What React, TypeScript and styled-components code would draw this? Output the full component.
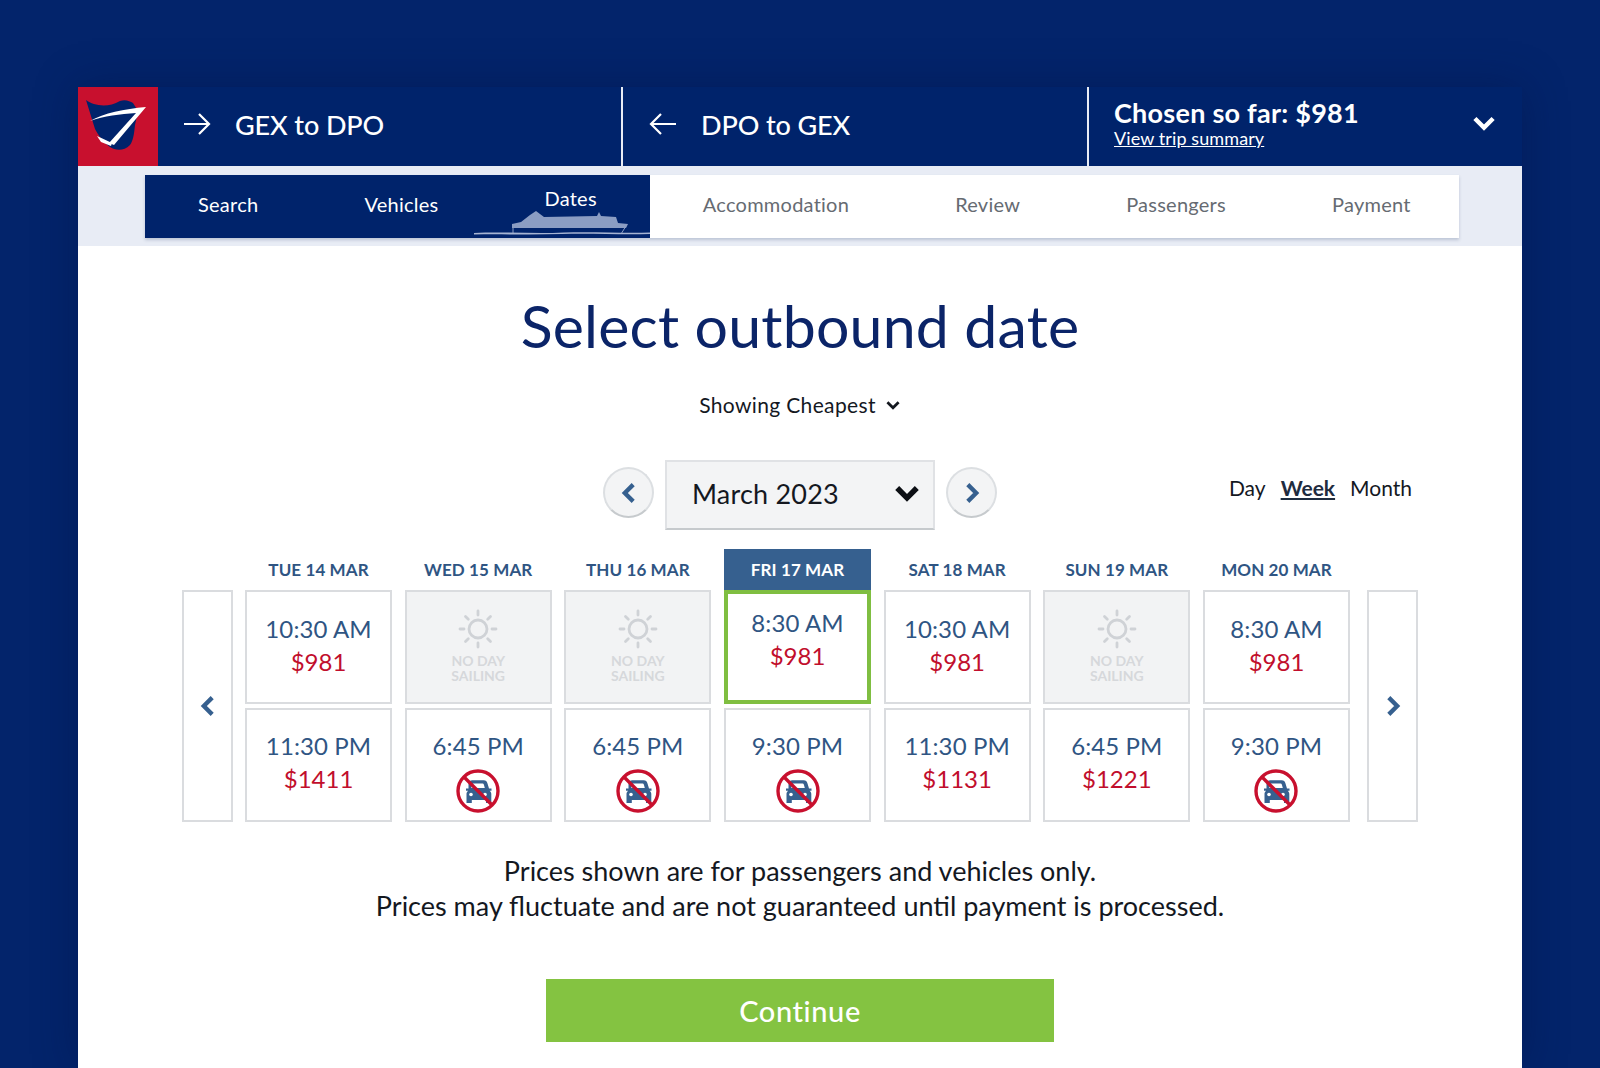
import React from 'react';
import styled, { createGlobalStyle } from 'styled-components';

const GlobalStyle = createGlobalStyle`
  html, body { margin: 0; padding: 0; background: #03246b; }
  body { font-family: Lato, "Open Sans", sans-serif; color: #14181f; }
`;

const Page = styled.div`
  width: 1600px;
  height: 1068px;
  overflow: hidden;
  padding: 87px 78px 0;
  box-sizing: border-box;
  background: #03246b;
`;

const Frame = styled.div`
  width: 1444px;
  height: 981px;
  background: #fff;
  box-shadow: 0 0 40px rgba(0, 16, 60, 0.35);
`;

const Header = styled.header`
  display: flex;
  height: 79px;
  background: #00236b;
  color: #fff;
`;

const LogoBox = styled.div`
  width: 80px;
  flex: none;
  background: #c8102e;
  display: flex;
`;

const Leg = styled.div<{ $w: number; $pad: number }>`
  width: ${({ $w }) => $w}px;
  flex: none;
  box-sizing: border-box;
  padding-left: ${({ $pad }) => $pad}px;
  padding-bottom: 5px;
  display: flex;
  align-items: center;
  gap: 24px;
  border-right: 2px solid #e8ecf5;
  font-size: 27px;
  letter-spacing: -0.1px;
  font-weight: 500;
`;

const Summary = styled.div`
  flex: 1;
  display: flex;
  align-items: center;
  justify-content: space-between;
  padding: 0 25px 7px 25px;
`;

const SummaryTitle = styled.div`
  font-size: 27px;
  font-weight: 700;
  line-height: 30px;
  letter-spacing: 0.25px;
`;

const SummaryLink = styled.a`
  display: block;
  font-size: 18px;
  line-height: 20px;
  letter-spacing: 0.1px;
  text-decoration: underline;
  color: #fff;
`;

const StepBand = styled.div`
  height: 80px;
  box-sizing: border-box;
  padding: 9px 63px 8px 67px;
  background: #e8ecf5;
`;

const Steps = styled.nav`
  display: flex;
  height: 63px;
  background: #fff;
  box-shadow: 0 2px 3px rgba(60, 80, 120, 0.25);
`;

const DoneSteps = styled.div`
  display: flex;
  position: relative;
  background: #00236b;
`;

const Step = styled.div<{ $active?: boolean; $done?: boolean }>`
  padding: 0 53px;
  display: flex;
  align-items: center;
  font-size: 20px;
  letter-spacing: 0.25px;
  color: ${({ $done }) => ($done ? '#fff' : '#666b72')};
  padding-bottom: ${({ $active }) => ($active ? '18px' : '6px')};
`;

const Ship = styled.svg`
  position: absolute;
  right: 0;
  bottom: 0;
  width: 176px;
  height: 32px;
`;

const Content = styled.main`
  display: flex;
  flex-direction: column;
  align-items: center;
`;

const Title = styled.h1`
  margin: 45px 0 0;
  font-size: 59px;
  line-height: 70px;
  font-weight: 400;
  color: #0b2468;
  letter-spacing: 0.2px;
`;

const Sort = styled.div`
  margin-top: 30px;
  font-size: 21px;
  line-height: 28px;
  letter-spacing: 0.35px;
  display: flex;
  align-items: center;
  gap: 9px;
`;

const DateBar = styled.div`
  margin-top: 41px;
  width: 1236px;
  height: 70px;
  position: relative;
  display: flex;
  justify-content: center;
  align-items: center;
  gap: 11px;
`;

const RoundButton = styled.button`
  width: 51px;
  height: 51px;
  margin-bottom: 5px;
  padding: 0;
  border-radius: 50%;
  border: 2px solid #dcdfe2;
  border-bottom-color: #c6cacd;
  background: #f3f4f5;
  display: flex;
  align-items: center;
  justify-content: center;
`;

const MonthSelect = styled.div`
  width: 270px;
  height: 70px;
  box-sizing: border-box;
  padding: 0 12px 4px 25px;
  display: flex;
  align-items: center;
  justify-content: space-between;
  background: #f3f4f5;
  border: 2px solid #e0e2e5;
  border-bottom-color: #c6cacd;
  font-size: 27px;
  letter-spacing: 0.2px;
`;

const ViewSwitch = styled.div`
  position: absolute;
  right: 6px;
  top: 14px;
  display: flex;
  gap: 15px;
  font-size: 21px;
  line-height: 28px;
`;

const ViewOption = styled.span<{ $active?: boolean }>`
  font-weight: ${({ $active }) => ($active ? 700 : 400)};
  text-decoration: ${({ $active }) => ($active ? 'underline' : 'none')};
  color: ${({ $active }) => ($active ? '#1f2c3f' : '#14181f')};
`;

const Calendar = styled.div`
  margin-top: 19px;
  width: 1236px;
  display: flex;
  justify-content: space-between;
  align-items: flex-end;
`;

const PageArrow = styled.div`
  width: 51px;
  height: 232px;
  box-sizing: border-box;
  border: 2px solid #dadcdf;
  display: flex;
  align-items: center;
  justify-content: center;
`;

const Week = styled.div`
  margin-left: 12px;
  margin-right: 17px;
  display: grid;
  grid-template-columns: repeat(7, 147px);
  grid-template-rows: 41px 114px 118px;
  column-gap: 12.67px;
`;

const DayHead = styled.div<{ $active?: boolean }>`
  display: flex;
  align-items: center;
  justify-content: center;
  padding-bottom: 1px;
  font-size: 17px;
  font-weight: 700;
  letter-spacing: 0.1px;
  color: ${({ $active }) => ($active ? '#fff' : '#2f5583')};
  background: ${({ $active }) => ($active ? '#36608f' : 'transparent')};
`;

const Cell = styled.div<{ $selected?: boolean; $off?: boolean; $lower?: boolean }>`
  box-sizing: border-box;
  height: 114px;
  margin-top: ${({ $lower }) => ($lower ? '4px' : '0')};
  padding-top: ${({ $selected, $lower }) => ($selected ? '13px' : $lower ? '20px' : '21px')};
  border: ${({ $selected }) => ($selected ? '4px solid #7fbe41' : '2px solid #dadcdf')};
  background: ${({ $off }) => ($off ? '#f2f3f4' : '#fff')};
  display: flex;
  flex-direction: column;
  align-items: center;
`;

const Time = styled.div`
  font-size: 24px;
  line-height: 32px;
  color: #2f5583;
  letter-spacing: 0.1px;
`;

const Price = styled.div`
  font-size: 24px;
  line-height: 33px;
  color: #c10e2c;
`;

const NoSailing = styled.div`
  margin-top: 3px;
  font-size: 14px;
  line-height: 15px;
  font-weight: 700;
  text-align: center;
  color: #d6d8db;
`;

const SunMark = styled.svg`
  margin-top: -5px;
  width: 42px;
  height: 42px;
`;

const NoCarMark = styled.svg`
  margin-top: 7px;
  width: 44px;
  height: 44px;
`;

const Notice = styled.p`
  margin: 31px 0 0;
  font-size: 27px;
  line-height: 35px;
  text-align: center;
`;

const ContinueButton = styled.button`
  margin-top: 56px;
  width: 508px;
  height: 63px;
  border: 0;
  background: #84c341;
  color: #fff;
  font-family: inherit;
  font-size: 29px;
  font-weight: 500;
  letter-spacing: 0.6px;
`;

const Logo = () => (
  <svg width="80" height="79" viewBox="0 0 80 79">
    <path d="M8 13C16 19 30 21 42 14 47 12 52 14 55 16L60 24 57 38C56 48 55 54 52 58 46 64 38 64 32 60 26 56 20 48 17 42z" fill="#00236b" />
    <path d="M12 34C26 26 46 22 68 20L36 58 31 56 58 26C42 27 26 29 12 34z" fill="#fff" />
    <path d="M19 49 34 56 33 59 23 55z" fill="#fff" />
  </svg>
);

const LongArrow = ({ left }: { left?: boolean }) => (
  <svg width="28" height="24" viewBox="0 0 28 24" fill="none" stroke="#fff" strokeWidth="2.2">
    {left ? <path d="M27 12H2M12 2 2 12l10 10" /> : <path d="M1 12h25M16 2l10 10-10 10" />}
  </svg>
);

const Chevron = ({ dir, color, size, sw }: { dir: 'l' | 'r' | 'd'; color: string; size: number; sw: number }) => (
  <svg width={size} height={size} viewBox="0 0 20 20" fill="none" stroke={color} strokeWidth={sw}>
    {dir === 'l' && <path d="M13.5 3 6.5 10l7 7" />}
    {dir === 'r' && <path d="M6.5 3l7 7-7 7" />}
    {dir === 'd' && <path d="M3 6.500l7 7 7-7" />}
  </svg>
);

const SunIcon = () => (
  <SunMark viewBox="0 0 42 42" fill="none" stroke="#cfd2d6" strokeWidth="2.800" strokeLinecap="round">
    <circle cx="21" cy="21" r="9" />
    <path d="M21 3v4M21 35v4M3 21h4M35 21h4M8.500 8.500l2.800 2.800M30.700 30.700l2.800 2.800M33.500 8.500l-2.800 2.800M11.300 30.700l-2.800 2.800" />
  </SunMark>
);

const NoCarIcon = () => (
  <NoCarMark viewBox="0 0 44 44">
    <path d="M12.500 14.500c.6-2 1.800-3.200 3.800-3.200h11.400c2 0 3.200 1.200 3.800 3.200l1.500 5h2.500v2.300h-1.800c1 .9 1.600 2 1.600 3.200v9h-5.300v-3H15.800v3h-5.300v-9c0-1.200.6-2.300 1.600-3.200H10v-2.300h2.500z" fill="#36608f" />
    <path d="M15.200 19l1-3.600c.2-.7.6-1 1.200-1h9.200c.6 0 1 .3 1.200 1l1 3.600z" fill="#fff" />
    <circle cx="15" cy="25.500" r="1.800" fill="#fff" />
    <circle cx="29" cy="25.500" r="1.800" fill="#fff" />
    <circle cx="22" cy="22" r="20" fill="none" stroke="#c8102e" strokeWidth="3.400" />
    <path d="M8 8l28 28" stroke="#c8102e" strokeWidth="3.400" />
  </NoCarMark>
);

type Slot = { time?: string; price?: string; noCar?: boolean; off?: boolean };
type Day = { label: string; slots: [Slot, Slot]; selected?: boolean };

const days: Day[] = [
  { label: 'TUE 14 MAR', slots: [{ time: '10:30 AM', price: '$981' }, { time: '11:30 PM', price: '$1411' }] },
  { label: 'WED 15 MAR', slots: [{ off: true }, { time: '6:45 PM', noCar: true }] },
  { label: 'THU 16 MAR', slots: [{ off: true }, { time: '6:45 PM', noCar: true }] },
  { label: 'FRI 17 MAR', selected: true, slots: [{ time: '8:30 AM', price: '$981' }, { time: '9:30 PM', noCar: true }] },
  { label: 'SAT 18 MAR', slots: [{ time: '10:30 AM', price: '$981' }, { time: '11:30 PM', price: '$1131' }] },
  { label: 'SUN 19 MAR', slots: [{ off: true }, { time: '6:45 PM', price: '$1221' }] },
  { label: 'MON 20 MAR', slots: [{ time: '8:30 AM', price: '$981' }, { time: '9:30 PM', noCar: true }] },
];

const SlotCell = ({ slot, selected, lower }: { slot: Slot; selected?: boolean; lower?: boolean }) => (
  <Cell $selected={selected} $off={slot.off} $lower={lower}>
    {slot.off ? (
      <>
        <SunIcon />
        <NoSailing>NO DAY<br />SAILING</NoSailing>
      </>
    ) : (
      <>
        <Time>{slot.time}</Time>
        {slot.price && <Price>{slot.price}</Price>}
        {slot.noCar && <NoCarIcon />}
      </>
    )}
  </Cell>
);

export default function App() {
  return (
    <Page>
      <GlobalStyle />
      <Frame>
        <Header>
          <LogoBox><Logo /></LogoBox>
          <Leg $w={465} $pad={25}><LongArrow />GEX to DPO</Leg>
          <Leg $w={466} $pad={26}><LongArrow left />DPO to GEX</Leg>
          <Summary>
            <div>
              <SummaryTitle>Chosen so far: $981</SummaryTitle>
              <SummaryLink>View trip summary</SummaryLink>
            </div>
            <Chevron dir="d" color="#fff" size={26} sw={3.4} />
          </Summary>
        </Header>
        <StepBand>
          <Steps>
            <DoneSteps>
              <Step $done>Search</Step>
              <Step $done>Vehicles</Step>
              <Step $done $active>Dates</Step>
              <Ship viewBox="0 0 176 32">
                <path d="M38 18 47 16 56 9 62 5 70 11 123 10 125 6 127 10 142 11 144 17 154 18 152 22H38z" fill="#8b9dc3" />
                <path d="M39 18V28M152 20 147 28" stroke="#8b9dc3" strokeWidth="1" fill="none" />
                <path d="M0 27c30-1.500 60 1 90-.5 30-1 60 1 86 0v1.500c-30 1-58-1-88 0-30 1-60 0-88 .5z" fill="#a6b4d2" />
              </Ship>
            </DoneSteps>
            <Step>Accommodation</Step>
            <Step>Review</Step>
            <Step>Passengers</Step>
            <Step>Payment</Step>
          </Steps>
        </StepBand>
        <Content>
          <Title>Select outbound date</Title>
          <Sort>Showing Cheapest <Chevron dir="d" color="#14181f" size={16} sw={3.4} /></Sort>
          <DateBar>
            <RoundButton><Chevron dir="l" color="#36608f" size={24} sw={3.6} /></RoundButton>
            <MonthSelect>March 2023 <Chevron dir="d" color="#0c0f14" size={28} sw={4} /></MonthSelect>
            <RoundButton><Chevron dir="r" color="#36608f" size={24} sw={3.6} /></RoundButton>
            <ViewSwitch>
              <ViewOption>Day</ViewOption>
              <ViewOption $active>Week</ViewOption>
              <ViewOption>Month</ViewOption>
            </ViewSwitch>
          </DateBar>
          <Calendar>
            <PageArrow><Chevron dir="l" color="#36608f" size={24} sw={3.6} /></PageArrow>
            <Week>
              {days.map((d) => <DayHead key={d.label} $active={d.selected}>{d.label}</DayHead>)}
              {days.map((d) => <SlotCell key={d.label} slot={d.slots[0]} selected={d.selected} />)}
              {days.map((d) => <SlotCell key={d.label} slot={d.slots[1]} lower />)}
            </Week>
            <PageArrow><Chevron dir="r" color="#36608f" size={24} sw={3.6} /></PageArrow>
          </Calendar>
          <Notice>
            Prices shown are for passengers and vehicles only.<br />
            Prices may fluctuate and are not guaranteed until payment is processed.
          </Notice>
          <ContinueButton>Continue</ContinueButton>
        </Content>
      </Frame>
    </Page>
  );
}
